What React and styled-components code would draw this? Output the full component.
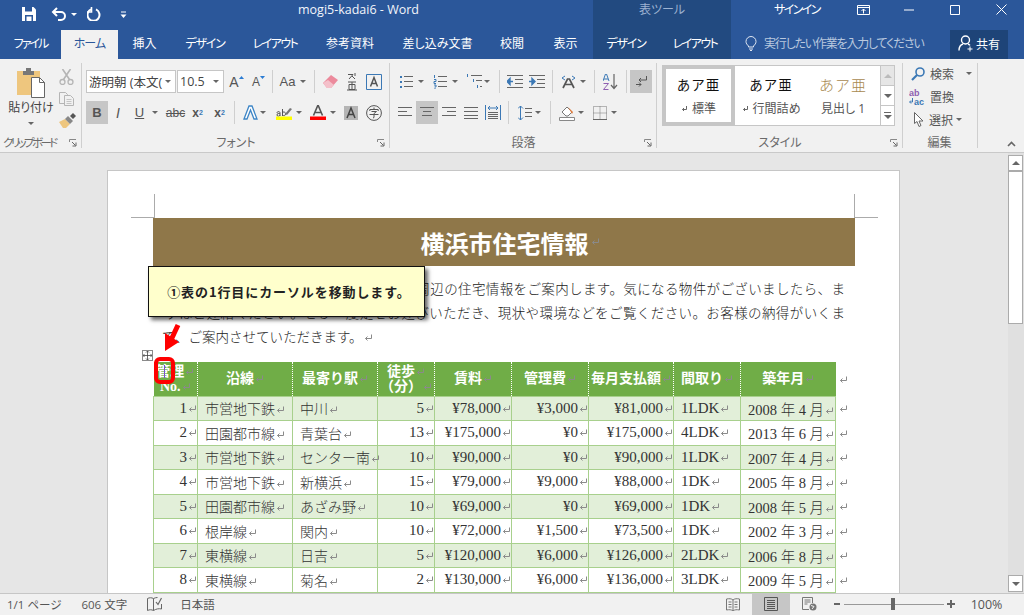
import styled, { createGlobalStyle } from 'styled-components';

const UI = '"Open Sans", "Noto Sans CJK JP", sans-serif';
const MINCHO = '"Liberation Serif", "Noto Sans CJK JP", serif';

const Global = createGlobalStyle`
  html, body { margin: 0; padding: 0; overflow: hidden; background: #e6e6e6; }
  * { box-sizing: border-box; }
`;

const Shell = styled.div`
  width: 1024px;
  height: 615px;
  display: flex;
  flex-direction: column;
  overflow: hidden;
  font-family: ${UI};
  font-feature-settings: 'palt';
`;

/* title bar */
const TitleBar = styled.div`
  height: 30px;
  flex: none;
  display: flex;
  background: #2b579a;
  color: #fff;
  font-size: 12px;
`;

const Qat = styled.div`
  width: 298px;
  display: flex;
  align-items: center;
  padding: 0 0 2px 22px;
`;

const QatGap = styled.span`
  width: ${(p) => p.$w}px;
`;

const QatCaret = styled.span`
  border-left: 3px solid transparent;
  border-right: 3px solid transparent;
  border-top: 3px solid #fff;
`;

const DocTitle = styled.div`
  width: 295px;
  line-height: 19px;
  font-size: 12.5px;
  color: #f2f5fa;
`;

const ContextLabel = styled.div`
  width: 138px;
  background: #224a80;
  color: #9db2d1;
  text-align: center;
  line-height: 20px;
`;

const SignIn = styled.div`
  margin-left: 43px;
  width: 66px;
  line-height: 19px;
  letter-spacing: -1.600px;
`;

const WinButton = styled.div`
  width: 46px;
  height: 19px;
  display: flex;
  align-items: center;
  justify-content: center;
`;

const TabRow = styled.div`
  height: 29px;
  flex: none;
  display: flex;
  background: #2b579a;
  color: #fff;
  font-size: 12px;
`;

const Tab = styled.div`
  width: ${(p) => p.$w}px;
  display: flex;
  align-items: center;
  justify-content: center;
  padding-bottom: 3px;
  letter-spacing: ${(p) => p.$ls ?? 0}px;
  background: ${(p) => (p.$active ? '#f1f1f1' : p.$context ? '#224a80' : 'transparent')};
  color: ${(p) => (p.$active ? '#2b579a' : '#fff')};
`;

const Hint = styled.div`
  margin-left: 14px;
  width: 205px;
  display: flex;
  align-items: center;
  gap: 7px;
  padding-bottom: 3px;
  color: #b9c8de;
  letter-spacing: -1.200px;
`;

const Share = styled.div`
  width: 58px;
  height: 29px;
  display: flex;
  align-items: center;
  justify-content: center;
  gap: 2px;
  padding-bottom: 2px;
  background: #1e4478;
`;

/* ribbon */
const Ribbon = styled.div`
  height: 94px;
  flex: none;
  display: flex;
  background: #f1f1f1;
  border-bottom: 1px solid #c9c9c9;
  color: #555;
`;

const Group = styled.div`
  position: relative;
  width: ${(p) => p.$w}px;
  flex: none;
  display: flex;
  flex-direction: column;
  &::after {
    content: '';
    position: absolute;
    right: 0;
    top: 4px;
    bottom: 4px;
    width: 1px;
    background: #cfcfcf;
  }
`;

const GroupBody = styled.div`
  height: 74px;
  display: flex;
  flex-direction: ${(p) => p.$dir || 'column'};
  gap: ${(p) => p.$gap ?? 8}px;
  padding: ${(p) => p.$pad || '11px 0 0 4px'};
`;

const GroupLabel = styled.div`
  height: 19px;
  font-size: ${(p) => p.$size || 12}px;
  line-height: 19px;
  text-align: ${(p) => p.$align || 'center'};
  color: #6a6a6a;
  white-space: nowrap;
  letter-spacing: ${(p) => p.$ls ?? 0}px;
  padding: 0 ${(p) => p.$inset ?? 0}px 0 ${(p) => p.$start ?? 0}px;
`;

const Launcher = styled.svg`
  position: absolute;
  right: 5px;
  bottom: 5px;
`;

const Row = styled.div`
  height: 23px;
  display: flex;
  align-items: center;
`;

const Tool = styled.div`
  width: ${(p) => p.$w}px;
  height: 23px;
  flex: none;
  display: flex;
  align-items: center;
  justify-content: center;
  gap: ${(p) => p.$gap ?? 0}px;
  background: ${(p) => (p.$active ? '#c6c6c6' : 'transparent')};
  color: #555;
  font-size: ${(p) => p.$size || 13}px;
  font-family: "Liberation Sans", sans-serif;
  font-weight: ${(p) => (p.$bold ? 700 : 400)};
  font-style: ${(p) => (p.$italic ? 'italic' : 'normal')};
  text-decoration: ${(p) => (p.$under ? 'underline' : p.$strike ? 'line-through' : 'none')};
`;

const SubScript = styled.sub`
  font-size: 7px;
  color: #3b78b5;
`;

const SupScript = styled.sup`
  font-size: 7px;
  color: #3b78b5;
`;

const Caret = styled.span`
  width: 0;
  height: 0;
  flex: none;
  margin-left: ${(p) => p.$ml ?? 0}px;
  border-left: 3px solid transparent;
  border-right: 3px solid transparent;
  border-top: 3px solid #666;
`;

const Sep = styled.div`
  width: ${(p) => p.$w}px;
  height: 23px;
  flex: none;
  display: flex;
  justify-content: center;
  &::before {
    content: '';
    width: 1px;
    background: #cfcfcf;
  }
`;

const ComboBox = styled.div`
  width: ${(p) => p.$w}px;
  height: 23px;
  flex: none;
  margin-right: ${(p) => p.$mr ?? 0}px;
  display: flex;
  align-items: center;
  justify-content: space-between;
  padding: 0 4px 0 2px;
  background: #fff;
  border: 1px solid #c6c6c6;
  font-size: 12.5px;
  color: #444;
  white-space: nowrap;
  font-feature-settings: normal;
`;

const Paste = styled.div`
  width: 56px;
  display: flex;
  flex-direction: column;
  align-items: center;
  font-size: 12px;
  color: #444;
`;

const PasteLabel = styled.div`
  margin-top: 2px;
  line-height: 16px;
  margin-bottom: 6px;
`;

const ClipTools = styled.div`
  display: flex;
  flex-direction: column;
  gap: 7px;
  padding-top: 1px;
`;

const Gallery = styled.div`
  margin: 6px 0 0 5px;
  width: 233px;
  height: 61px;
  display: flex;
  background: #fff;
  border: 1px solid #c6c6c6;
`;

const StyleTile = styled.div`
  width: ${(p) => p.$w}px;
  flex: none;
  display: flex;
  flex-direction: column;
  align-items: center;
  justify-content: center;
  gap: 6px;
  border: ${(p) => (p.$selected ? '4px solid #c6c6c6' : 'none')};
  margin: ${(p) => (p.$selected ? '-1px 0 -1px -1px' : '0')};
`;

const Sample = styled.div`
  font-size: ${(p) => p.$size || 13.5}px;
  line-height: 20px;
  color: ${(p) => p.$color || '#111'};
  font-weight: ${(p) => p.$weight || 400};
  letter-spacing: 1px;
  font-feature-settings: normal;
`;

const TileName = styled.div`
  font-size: 12px;
  line-height: 16px;
  color: #555;
  display: flex;
  align-items: center;
  gap: 4px;
  white-space: nowrap;
`;

const GalleryRail = styled.div`
  margin-left: auto;
  width: 14px;
  display: flex;
  flex-direction: column;
  border-left: 1px solid #c6c6c6;
`;

const RailButton = styled.div`
  flex: 1;
  display: flex;
  flex-direction: column;
  align-items: center;
  justify-content: center;
  gap: 2px;
  background: ${(p) => (p.$disabled ? '#e6e6e6' : '#fff')};
  border-bottom: ${(p) => (p.$last ? 'none' : '1px solid #c6c6c6')};
`;

const EditRow = styled.div`
  height: 23px;
  display: flex;
  align-items: center;
  gap: 5px;
  padding-left: ${(p) => p.$inset ?? 8}px;
  font-size: 12px;
  color: #555;
  white-space: nowrap;
`;

const Collapse = styled.div`
  flex: 1;
  display: flex;
  align-items: flex-end;
  justify-content: flex-end;
  padding: 0 8px 5px 0;
`;

/* document */
const DocArea = styled.div`
  flex: 1;
  min-height: 0;
  display: flex;
  background: #e6e6e6;
  overflow: hidden;
`;

const Canvas = styled.div`
  flex: 1;
  padding: 17px 0 0 107px;
  overflow: hidden;
`;

const Page = styled.div`
  position: relative;
  width: 793px;
  height: 600px;
  padding: 47px 0 0 45px;
  background: #fff;
  border: 1px solid #c6c6c6;
`;

const CropMark = styled.div`
  position: absolute;
  top: 23px;
  left: ${(p) => p.$x}px;
  width: 24px;
  height: 24px;
  border-bottom: 1px solid #ababab;
  ${(p) => (p.$flip ? 'border-left' : 'border-right')}: 1px solid #ababab;
`;

const Banner = styled.div`
  width: 702px;
  height: 48px;
  background: #8f7749;
  color: #fff;
  font-family: "Noto Sans CJK JP", sans-serif;
  font-weight: 700;
  font-size: 24px;
  display: flex;
  align-items: center;
  justify-content: center;
  gap: 1px;
  padding-left: 12px;
  font-feature-settings: normal;
`;

const Body = styled.div`
  margin: 12px 0 12px 1px;
  width: 691px;
  font-family: ${MINCHO};
  font-size: 13.5px;
  font-weight: 300;
  color: #222;
  font-feature-settings: normal;
`;

const Line = styled.div`
  height: 24px;
  line-height: 24px;
  white-space: nowrap;
  text-align: justify;
  text-align-last: ${(p) => (p.$last ? 'left' : 'justify')};
  padding-left: ${(p) => p.$indent ?? 0}px;
`;

const Grid = styled.table`
  width: 700px;
  table-layout: fixed;
  border-collapse: collapse;
  font-family: ${MINCHO};
  font-feature-settings: normal;
`;

const HeadCell = styled.th`
  height: 34px;
  padding: 0;
  background: #70ad47;
  color: #fff;
  font-size: 14px;
  line-height: 15px;
  font-weight: 700;
  text-align: center;
  border-right: 1px dotted #fff;
  &:nth-child(9) {
    border-right: none;
  }
`;

const Cell = styled.td`
  height: 24.5px;
  padding: ${(p) => (p.$right ? '0' : '0 0 0 7px')};
  background: ${(p) => (p.$band ? '#e2efd9' : '#fff')};
  border: 1px solid #a8d08d;
  color: #333;
  font-size: ${(p) => p.$size}px;
  font-weight: 300;
  text-align: ${(p) => (p.$right ? 'right' : 'left')};
  white-space: nowrap;
`;

const EndCell = styled.td`
  padding: 0 0 0 2px;
  background: #fff;
  border: none;
`;

const Handle = styled.div`
  position: absolute;
  left: 34px;
  top: 179px;
  width: 11px;
  height: 11px;
  display: flex;
  align-items: center;
  justify-content: center;
  background: #fff;
  border: 1px solid #8a8a8a;
`;

const Callout = styled.div`
  position: absolute;
  left: 40px;
  top: 95px;
  width: 277px;
  height: 51px;
  display: flex;
  align-items: center;
  justify-content: center;
  padding-left: 5px;
  background: #ffffcc;
  border: 1px solid #111;
  box-shadow: 3px 3px 4px rgba(0, 0, 0, 0.6);
  font-family: "Noto Sans CJK JP", sans-serif;
  font-weight: 700;
  font-size: 13px;
  letter-spacing: 0.9px;
  color: #222;
  font-feature-settings: normal;
`;

const PointerArrow = styled.svg`
  position: absolute;
  left: 53px;
  top: 152px;
`;

const CaretRing = styled.div`
  position: absolute;
  left: 46px;
  top: 186px;
  width: 21px;
  height: 27px;
  border: 4px solid #ff0000;
  border-radius: 6px;
  &::after {
    content: '';
    position: absolute;
    left: 6px;
    top: 4px;
    width: 1px;
    height: 13px;
    background: #7a4fd0;
  }
`;

const Scrollbar = styled.div`
  width: 16px;
  flex: none;
  display: flex;
  flex-direction: column;
  padding-top: 2px;
  background: #e0e0e0;
`;

const ScrollButton = styled.div`
  width: 15px;
  height: ${(p) => p.$h}px;
  display: flex;
  align-items: center;
  justify-content: center;
  background: #fff;
  border: 1px solid #ababab;
  margin-top: ${(p) => (p.$end ? 'auto' : '0')};
  margin-bottom: ${(p) => (p.$end ? '1px' : '0')};
`;

const Thumb = styled.div`
  width: 15px;
  height: 153px;
  background: #fff;
  border: 1px solid #ababab;
`;

const UpCaret = styled(Caret)`
  border-top: none;
  border-bottom: 4px solid ${(p) => p.$color || '#666'};
  border-left-width: 4px;
  border-right-width: 4px;
`;

const DownCaret = styled(Caret)`
  border-top: 4px solid #666;
  border-left-width: 4px;
  border-right-width: 4px;
`;

const MoreBar = styled.span`
  width: 7px;
  height: 1px;
  background: #666;
`;

/* status bar */
const StatusBar = styled.div`
  height: 22px;
  flex: none;
  display: flex;
  align-items: center;
  background: #f1f1f1;
  border-top: 1px solid #c6c6c6;
  font-size: 11.5px;
  color: #555;
  padding-bottom: 1px;
`;

const StatusItem = styled.div`
  margin-left: ${(p) => p.$ml}px;
  display: flex;
  align-items: center;
  white-space: nowrap;
  font-size: ${(p) => p.$size || 11.5}px;
`;

const ViewButton = styled.div`
  width: ${(p) => p.$w}px;
  height: 21px;
  display: flex;
  align-items: center;
  justify-content: center;
  background: ${(p) => (p.$active ? '#c6c6c6' : 'transparent')};
`;

const ZoomTrack = styled.div`
  position: relative;
  width: 100px;
  height: 1px;
  margin: 0 3px 0 4px;
  background: #999;
`;

const ZoomThumb = styled.div`
  position: absolute;
  left: 47px;
  top: -6px;
  width: 4px;
  height: 12px;
  background: #666;
`;

const MarkSvg = styled.svg`
  margin-left: 1px;
`;

/* icons */
const Svg = ({ w, h = w, children, ...rest }) => (
  <svg width={w} height={h} viewBox={`0 0 ${w} ${h}`} fill="none" {...rest}>
    {children}
  </svg>
);

const SaveIcon = () => (
  <Svg w={14} h={14}>
    <path d="M0 0h11.5L14 2.5V14H0z" fill="#fff" />
    <path d="M3 0h7v4.5H3z" fill="#2b579a" />
    <path d="M3 8h8v6H3z" fill="#2b579a" />
    <path d="M4.5 9.5h5v4.5h-5z" fill="#fff" />
  </Svg>
);
const UndoIcon = () => (
  <Svg w={16} h={14}>
    <path d="M2 5h8a4 4 0 0 1 0 8H7" stroke="#fff" strokeWidth="2" />
    <path d="M6 1L2 5l4 4" stroke="#fff" strokeWidth="2" />
  </Svg>
);
const RedoIcon = () => (
  <Svg w={14} h={14}>
    <path d="M4 2.4a6 6 0 1 0 5 0" stroke="#fff" strokeWidth="2" />
    <path d="M4.5 0v5H0" stroke="#fff" strokeWidth="1.6" />
  </Svg>
);
const QatMore = () => (
  <Svg w={7} h={7}>
    <path d="M1 1h5" stroke="#fff" />
    <path d="M.5 3.5h6L3.5 7z" fill="#fff" />
  </Svg>
);
const DisplayIcon = () => (
  <Svg w={13} h={10}>
    <path d="M.5.5h12v9H.5zM.5 2.5h12" stroke="#fff" />
    <path d="M6.5 8.5V4M4.5 6l2-2 2 2" stroke="#fff" />
  </Svg>
);
const MinIcon = () => <Svg w={10} h={2}><path d="M0 1h10" stroke="#fff" /></Svg>;
const MaxIcon = () => <Svg w={10} h={10}><path d="M.5.5h9v9h-9z" stroke="#fff" /></Svg>;
const CloseIcon = () => <Svg w={11} h={11}><path d="M.5.5l10 10M10.5.5l-10 10" stroke="#fff" /></Svg>;
const LampIcon = () => (
  <Svg w={12} h={15}>
    <path d="M3.5 10C2 8.5 1 7.5 1 5.5a5 5 0 0 1 10 0c0 2-1 3-2.5 4.500V11h-5z" stroke="#dfe6f1" />
    <path d="M4 13h4M5 14.500h2" stroke="#dfe6f1" />
  </Svg>
);
const ShareIcon = () => (
  <Svg w={16} h={17}>
    <circle cx="7.500" cy="5" r="4" stroke="#fff" strokeWidth="1.400" />
    <path d="M1 15.500c0-4 2.500-6 4-6.500M10 9c.8.3 1.500.8 2 1.400" stroke="#fff" strokeWidth="1.400" />
    <path d="M12 11.500v5M9.500 14h5" stroke="#fff" />
  </Svg>
);
const PasteIcon = () => (
  <Svg w={28} h={30}>
    <path d="M0 3h23v24H0z" fill="#eec67e" />
    <path d="M6 3h11v4H6z" fill="#777" />
    <path d="M9 0h5v4H9z" fill="#777" />
    <path d="M14.500 9.500h8l5 5v15h-13z" fill="#fff" stroke="#666" />
    <path d="M22.500 9.500v5h5" stroke="#666" />
  </Svg>
);
const ScissorsIcon = () => (
  <Svg w={15} h={16}>
    <circle cx="3.500" cy="13" r="2.500" stroke="#b5b5b5" strokeWidth="1.300" />
    <circle cx="11.500" cy="13" r="2.500" stroke="#b5b5b5" strokeWidth="1.300" />
    <path d="M10.500 10.500L3.500 0M4.500 10.500L11.500 0" stroke="#b5b5b5" strokeWidth="1.600" />
  </Svg>
);
const CopyIcon = () => (
  <Svg w={15} h={14}>
    <path d="M.5.5h6l2 2v9h-8z" fill="#f1f1f1" stroke="#b5b5b5" />
    <path d="M5.500 3.500h6l3 3v7h-9z" fill="#f1f1f1" stroke="#b5b5b5" />
    <path d="M7.500 7.500h5M7.500 9.500h5M7.500 11.500h5" stroke="#c5c5c5" />
  </Svg>
);
const PainterIcon = () => (
  <Svg w={17} h={15}>
    <path d="M0 9l6-3 5 5-4 4H4z" fill="#eec67e" />
    <path d="M6 6l5 5 3-3-5-5z" fill="#888" />
    <path d="M11 3l3-3 3 3-3 3z" fill="#555" />
  </Svg>
);
const SizeArrow = ({ up }) => (
  <Svg w={5} h={12}>
    <path d={up ? 'M0 3l2.500-3L5 3z' : 'M0 0h5L2.500 3z'} fill="#2b7cd3" />
  </Svg>
);
const EraserIcon = () => (
  <Svg w={17} h={16}>
    <path d="M1 9l8-8 7 5-7 8H5z" fill="#ec8a9c" />
    <path d="M1 9l4 5h4l3-3-6-5z" fill="#f4c0ca" />
  </Svg>
);
const RubyIcon = () => (
  <Svg w={10} h={18}>
    <path d="M1 1.500h5L2 6M5 3l3 3M8 0v3" stroke="#555" />
    <path d="M1 9h8M2 11.500h6v5H2zM5 9v8M0 17h10" stroke="#555" />
  </Svg>
);
const BoxedAIcon = () => (
  <Svg w={16} h={16}>
    <path d="M.5.5h15v15H.5z" stroke="#3b78b5" />
    <path d="M4.500 12.500L8 3.500l3.500 9M6 9.500h4" stroke="#555" strokeWidth="1.500" />
  </Svg>
);
const EffectA = () => (
  <Svg w={15} h={15}>
    <path d="M1 14L6 1h3l5 13h-3L7.500 5 4 14z" fill="#fff" stroke="#3d85c6" strokeWidth="1.300" />
  </Svg>
);
const HighlightIcon = () => (
  <Svg w={16} h={15}>
    <path d="M1 8c0-2 3-2 3 0v3M4 9c-1-1-3-1-3 1s3 1 3 0M6.500 4v7M6.500 8c1-2 3-1 3 1s-2 2-3 1" stroke="#555" />
    <path d="M9 9l5-6 2 1-5 6z" fill="#777" />
    <path d="M0 11.500h16V15H0z" fill="#ffff00" />
  </Svg>
);
const ColorA = () => (
  <Svg w={16} h={15}>
    <path d="M3.500 10.500L8 0l4.500 10.500M5 7.500h6" stroke="#555" strokeWidth="1.600" />
    <path d="M0 11.500h16V15H0z" fill="#ff0000" />
  </Svg>
);
const ShadedA = () => (
  <Svg w={14} h={14}>
    <path d="M0 0h14v14H0z" fill="#b5b5b5" />
    <path d="M3 12L7 2l4 10M4.500 8.500h5" stroke="#444" strokeWidth="1.500" />
  </Svg>
);
const EnclosedJi = () => (
  <Svg w={16} h={16}>
    <circle cx="8" cy="8" r="7.400" stroke="#555" />
    <path d="M8 2.500v1.500M3.800 6V4.500h8.400V6M5.500 6.500h5L8 8.500v4l-1 .5M3.500 9.500h9" stroke="#555" />
  </Svg>
);
const Dots = ({ y, c = '#3b78b5' }) => <path d={`M1 ${y}h2v2H1z`} fill={c} />;
const BulletIcon = () => (
  <Svg w={14} h={14}>
    <Dots y={1} /><Dots y={6} /><Dots y={11} />
    <path d="M5 1.500h9M5 6.500h9M5 11.500h9" stroke="#666" />
  </Svg>
);
const NumberIcon = () => (
  <Svg w={14} h={14}>
    <path d="M1.500 0v3M1 4.500h2v2H1v2h2M1 10h2v2H1.500M1 14h2" stroke="#3b78b5" />
    <path d="M5 1.500h9M5 6.500h9M5 11.500h9" stroke="#666" />
  </Svg>
);
const MultiIcon = () => (
  <Svg w={16} h={15}>
    <path d="M1.500 0v3M7.500 5v3M11.500 11v3" stroke="#3b78b5" />
    <path d="M5 1.500h11M10 6.500h6M14 12.500h2" stroke="#666" />
  </Svg>
);
const IndentIcon = ({ flip }) => (
  <Svg w={16} h={13}>
    <path d="M0 .5h16M8 4.500h8M8 8.500h8M0 12.500h16" stroke="#666" />
    <path
      d={flip ? 'M0 6.500h4M3 3.500l3 3-3 3z' : 'M6 6.500H2M3 3.500l-3 3 3 3z'}
      stroke="#3b78b5"
      fill="#3b78b5"
      strokeWidth="1.400"
    />
  </Svg>
);
const AsianIcon = () => (
  <Svg w={15} h={14}>
    <path d="M2 13L6.500 4h2L13 13M4.500 9.500h6" stroke="#555" strokeWidth="1.700" />
    <path d="M4 1L1 3l3 2M11 1l3 2-3 2" stroke="#3b78b5" />
  </Svg>
);
const SortIcon = () => (
  <Svg w={16} h={16}>
    <path d="M0 7L2.500 0h1L6 7M1 5h4" stroke="#3b78b5" />
    <path d="M.5 9.500h5L.5 15.500h5" stroke="#8e5fb0" />
    <path d="M11 0v14M8 11l3 3.500 3-3.500" stroke="#666" strokeWidth="1.200" />
  </Svg>
);
const MarksIcon = () => (
  <Svg w={11} h={12}>
    <path d="M10.500 0v4H3M5 2L3 4l2 2" stroke="#555" />
    <path d="M0 8.500h5M3 6.500l2 2-2 2" stroke="#555" />
  </Svg>
);
const alignLines = {
  left: 'M0 1.500h14M0 5.500h9M0 9.500h14',
  center: 'M0 1.500h14M3 5.500h8M2 9.500h10',
  right: 'M0 1.500h14M5 5.500h9M0 9.500h14',
  full: 'M0 1.500h14M0 5.500h14M0 9.500h14M0 12.500h14',
};
const AlignIcon = ({ kind }) => (
  <Svg w={14} h={13}>
    <path d={alignLines[kind]} stroke="#666" />
  </Svg>
);
const DistributedIcon = () => (
  <Svg w={16} h={15}>
    <path d="M.5 0v15M15.500 0v15" stroke="#3b78b5" />
    <path d="M3 3h10M5 1l-2 2 2 2M11 1l2 2-2 2" stroke="#3b78b5" />
    <path d="M3 7.500h10M3 9.500h10M3 11.500h10M3 13.500h10" stroke="#666" />
  </Svg>
);
const LineSpacingIcon = () => (
  <Svg w={14} h={16}>
    <path d="M2.500 1v14M0 3.500L2.500 1 5 3.500M0 12.500L2.500 15 5 12.500" stroke="#3b78b5" />
    <path d="M7 3.500h7M7 7.500h7M7 11.500h7" stroke="#666" />
  </Svg>
);
const ShadingIcon = () => (
  <Svg w={16} h={16}>
    <path d="M3 7l5-5 5 5-4 4H7z" fill="#fff" stroke="#777" />
    <path d="M9 2l5 5-1 2z" fill="#e07a3a" />
    <path d="M.5 12.500h15v3H.5z" fill="#fff" stroke="#888" />
  </Svg>
);
const BordersIcon = () => (
  <Svg w={14} h={14}>
    <path d="M.5.5h13v13H.5zM7 .5v13M.5 7h13" stroke="#777" strokeDasharray="1 1" />
    <path d="M0 13.500h14" stroke="#666" />
  </Svg>
);
const SearchIcon = () => (
  <Svg w={14} h={14}>
    <circle cx="9" cy="5" r="4" stroke="#3b78b5" strokeWidth="1.600" />
    <path d="M6 8l-5 5" stroke="#3b78b5" strokeWidth="2.200" />
  </Svg>
);
const ReplaceIcon = () => (
  <Svg w={16} h={16}>
    <text x="0" y="7" fontSize="9" fontFamily="Liberation Sans" fontWeight="700" fill="#8e5fb0">ab</text>
    <text x="5" y="15.500" fontSize="9" fontFamily="Liberation Sans" fontWeight="700" fill="#3b78b5">ac</text>
    <path d="M3.500 9v4H1M2 11.500L.5 13 2 14.500" stroke="#3b78b5" />
  </Svg>
);
const PointerIcon = () => (
  <Svg w={10} h={15}>
    <path d="M.5.5v11l2.500-2 2 5 2-1-2-4.500h4z" fill="#fff" stroke="#666" />
  </Svg>
);
const ChevronUp = () => (
  <Svg w={9} h={6}>
    <path d="M1 5l3.500-3.500L8 5" stroke="#666" strokeWidth="1.600" />
  </Svg>
);
const LauncherIcon = () => (
  <Launcher width="8" height="8" viewBox="0 0 8 8" fill="none">
    <path d="M.5 3V.5H7" stroke="#888" />
    <path d="M3 3l3.500 3.500M7 3.500V7H3.500" stroke="#666" />
  </Launcher>
);
const ParaMark = () => (
  <MarkSvg width="9" height="8" viewBox="0 0 9 8" fill="none">
    <path d="M7.500 .5v4H1.500M3.500 2.500l-2 2 2 2" stroke="#8a8a8a" />
  </MarkSvg>
);
const SmallMark = () => (
  <Svg w={7} h={7}>
    <path d="M5.500 1v3.500H1.500M3 3L1.500 4.500 3 6" stroke="#666" />
  </Svg>
);
const MoveHandle = () => (
  <Svg w={9} h={9}>
    <path d="M4.500 0v9M0 4.500h9M3 1.500L4.500 0 6 1.500M3 7.500L4.500 9 6 7.500M1.500 3L0 4.500 1.500 6M7.500 3L9 4.500 7.500 6" stroke="#444" strokeWidth=".8" />
  </Svg>
);
const ProofIcon = () => (
  <Svg w={15} h={14}>
    <path d="M.5 1.500c2-1 4-1 6 0v12c-2-1-4-1-6 0zM6.500 1.500c1.500-.8 3-1 4-1M14.500 7v5c-2.500-.6-5-.3-8 1.500" stroke="#666" />
    <path d="M9 5l2 2.500L14.500 1" stroke="#666" strokeWidth="1.200" />
  </Svg>
);
const ReadIcon = () => (
  <Svg w={14} h={13}>
    <path d="M.5 1c2.500-.5 5-.5 6.500 1 1.500-1.500 4-1.500 6.500-1v11c-2.500-.5-5-.5-6.500 1-1.500-1.500-4-1.500-6.500-1zM7 2v11" stroke="#777" />
    <path d="M2.500 4h3M2.500 6.500h3M2.500 9h3M8.500 4h3M8.500 6.500h3M8.500 9h3" stroke="#777" />
  </Svg>
);
const PrintIcon = () => (
  <Svg w={14} h={14}>
    <path d="M.5.5h13v13H.5z" stroke="#555" />
    <path d="M3 3.500h8M3 5.500h8M3 7.500h8M3 9.500h8M3 11.500h8" stroke="#555" />
  </Svg>
);
const WebIcon = () => (
  <Svg w={15} h={14}>
    <path d="M7 12.500H.5V.5h10V6" stroke="#777" />
    <path d="M2.500 3h6M2.500 5h6M2.500 7h3" stroke="#777" />
    <circle cx="11" cy="10" r="3.500" fill="#777" />
    <path d="M9 8.500l3 1-2 2.500" stroke="#f1f1f1" />
  </Svg>
);

const headers = [
  ['管理', 'No.'],
  ['沿線'],
  ['最寄り駅'],
  ['徒歩', '（分）'],
  ['賃料'],
  ['管理費'],
  ['毎月支払額'],
  ['間取り'],
  ['築年月'],
];

const widths = [44, 95, 85, 57, 77, 77, 85, 67, 95, 18];

const sizes = [15, 14, 14, 15, 15, 15, 15, 15, 14.5];

const rows = [
  [1, '市営地下鉄', '中川', 5, '¥78,000', '¥3,000', '¥81,000', '1LDK', '2008 年 4 月'],
  [2, '田園都市線', '青葉台', 13, '¥175,000', '¥0', '¥175,000', '4LDK', '2013 年 6 月'],
  [3, '市営地下鉄', 'センター南', 10, '¥90,000', '¥0', '¥90,000', '1LDK', '2007 年 4 月'],
  [4, '市営地下鉄', '新横浜', 15, '¥79,000', '¥9,000', '¥88,000', '1DK', '2005 年 8 月'],
  [5, '田園都市線', 'あざみ野', 10, '¥69,000', '¥0', '¥69,000', '1DK', '2008 年 5 月'],
  [6, '根岸線', '関内', 10, '¥72,000', '¥1,500', '¥73,500', '1DK', '2002 年 3 月'],
  [7, '東横線', '日吉', 5, '¥120,000', '¥6,000', '¥126,000', '2LDK', '2006 年 8 月'],
  [8, '東横線', '菊名', 2, '¥130,000', '¥6,000', '¥136,000', '3LDK', '2009 年 5 月'],
];

const rightCols = [0, 3, 4, 5, 6];

export default function App() {
  return (
    <Shell lang="ja">
      <Global />
      <TitleBar>
        <Qat>
          <SaveIcon />
          <QatGap $w={15} />
          <UndoIcon />
          <QatGap $w={4} />
          <QatCaret />
          <QatGap $w={10} />
          <RedoIcon />
          <QatGap $w={19} />
          <QatMore />
        </Qat>
        <DocTitle>mogi5-kadai6 - Word</DocTitle>
        <ContextLabel>表ツール</ContextLabel>
        <SignIn>サインイン</SignIn>
        <WinButton><DisplayIcon /></WinButton>
        <WinButton><MinIcon /></WinButton>
        <WinButton><MaxIcon /></WinButton>
        <WinButton><CloseIcon /></WinButton>
      </TitleBar>

      <TabRow>
        <Tab $w={61} $ls={-2}>ファイル</Tab>
        <Tab $w={57} $active $ls={-1}>ホーム</Tab>
        <Tab $w={53}>挿入</Tab>
        <Tab $w={68} $ls={-1.2}>デザイン</Tab>
        <Tab $w={72} $ls={-1.6}>レイアウト</Tab>
        <Tab $w={78}>参考資料</Tab>
        <Tab $w={97}>差し込み文書</Tab>
        <Tab $w={52}>校閲</Tab>
        <Tab $w={55}>表示</Tab>
        <Tab $w={66} $context $ls={-1.2}>デザイン</Tab>
        <Tab $w={72} $context $ls={-1.6}>レイアウト</Tab>
        <Hint>
          <LampIcon />
          実行したい作業を入力してください
        </Hint>
        <Share>
          <ShareIcon />
          共有
        </Share>
      </TabRow>

      <Ribbon>
        <Group $w={82}>
          <GroupBody $dir="row" $gap={0} $pad="9px 0 0 3px">
            <Paste>
              <PasteIcon />
              <PasteLabel>貼り付け</PasteLabel>
              <Caret />
            </Paste>
            <ClipTools>
              <ScissorsIcon />
              <CopyIcon />
              <PainterIcon />
            </ClipTools>
          </GroupBody>
          <GroupLabel $align="left" $start={3} $size={11.5} $ls={-2.6}>クリップボード</GroupLabel>
          <LauncherIcon />
        </Group>

        <Group $w={308}>
          <GroupBody>
            <Row>
              <ComboBox $w={90} $mr={1}>
                <span>游明朝 (本文(</span>
                <Caret />
              </ComboBox>
              <ComboBox $w={47}>
                <span>10.5</span>
                <Caret />
              </ComboBox>
              <Tool $w={25} $size={14}>A<SizeArrow up /></Tool>
              <Tool $w={19} $size={12}>A<SizeArrow /></Tool>
              <Sep $w={8} />
              <Tool $w={34} $gap={5}>Aa<Caret /></Tool>
              <Sep $w={8} />
              <Tool $w={25}><EraserIcon /></Tool>
              <Tool $w={18}><RubyIcon /></Tool>
              <Tool $w={25}><BoxedAIcon /></Tool>
            </Row>
            <Row>
              <Tool $w={22} $active $bold>B</Tool>
              <Tool $w={20} $italic $size={14}>I</Tool>
              <Tool $w={36} $gap={7}><Tool as="span" $w={11} $under $size={13}>U</Tool><Caret /></Tool>
              <Tool $w={23} $strike $size={12}>abc</Tool>
              <Tool $w={21} $bold $size={12}>x<SubScript>2</SubScript></Tool>
              <Tool $w={23} $bold $size={12}>x<SupScript>2</SupScript></Tool>
              <Sep $w={6} />
              <Tool $w={35} $gap={2}><EffectA /><Caret /></Tool>
              <Tool $w={34} $gap={4}><HighlightIcon /><Caret /></Tool>
              <Tool $w={34} $gap={4}><ColorA /><Caret /></Tool>
              <Tool $w={21}><ShadedA /></Tool>
              <Tool $w={25}><EnclosedJi /></Tool>
            </Row>
          </GroupBody>
          <GroupLabel>フォント</GroupLabel>
          <LauncherIcon />
        </Group>

        <Group $w={267}>
          <GroupBody>
            <Row>
              <Tool $w={34} $gap={5}><BulletIcon /><Caret /></Tool>
              <Tool $w={34} $gap={5}><NumberIcon /><Caret /></Tool>
              <Tool $w={32} $gap={2}><MultiIcon /><Caret /></Tool>
              <Sep $w={10} />
              <Tool $w={22}><IndentIcon /></Tool>
              <Tool $w={22}><IndentIcon flip /></Tool>
              <Sep $w={9} />
              <Tool $w={32} $gap={4}><AsianIcon /><Caret /></Tool>
              <Sep $w={10} />
              <Tool $w={23}><SortIcon /></Tool>
              <Sep $w={8} />
              <Tool $w={22} $active><MarksIcon /></Tool>
            </Row>
            <Row>
              <Tool $w={22}><AlignIcon kind="left" /></Tool>
              <Tool $w={22} $active><AlignIcon kind="center" /></Tool>
              <Tool $w={22}><AlignIcon kind="right" /></Tool>
              <Tool $w={22}><AlignIcon kind="full" /></Tool>
              <Tool $w={22}><DistributedIcon /></Tool>
              <Sep $w={8} />
              <Tool $w={34} $gap={3}><LineSpacingIcon /><Caret /></Tool>
              <Sep $w={8} />
              <Tool $w={34} $gap={3}><ShadingIcon /><Caret /></Tool>
              <Tool $w={34} $gap={4}><BordersIcon /><Caret /></Tool>
            </Row>
          </GroupBody>
          <GroupLabel>段落</GroupLabel>
          <LauncherIcon />
        </Group>

        <Group $w={246}>
          <GroupBody $pad="0" $gap={0}>
            <Gallery>
              <StyleTile $w={73} $selected>
                <Sample>あア亜</Sample>
                <TileName><SmallMark />標準</TileName>
              </StyleTile>
              <StyleTile $w={72}>
                <Sample>あア亜</Sample>
                <TileName><SmallMark />行間詰め</TileName>
              </StyleTile>
              <StyleTile $w={72}>
                <Sample $size={15} $color="#a8894f" $weight={300}>あア亜</Sample>
                <TileName>見出し 1</TileName>
              </StyleTile>
              <GalleryRail>
                <RailButton $disabled><UpCaret $color="#bbb" /></RailButton>
                <RailButton><DownCaret /></RailButton>
                <RailButton $last><MoreBar /><DownCaret /></RailButton>
              </GalleryRail>
            </Gallery>
          </GroupBody>
          <GroupLabel>スタイル</GroupLabel>
          <LauncherIcon />
        </Group>

        <Group $w={75}>
          <GroupBody $pad="3px 0 0 0" $gap={0}>
            <EditRow>
              <SearchIcon />
              検索
              <Caret $ml={7} />
            </EditRow>
            <EditRow $inset={6}>
              <ReplaceIcon />
              置換
            </EditRow>
            <EditRow $inset={11}>
              <PointerIcon />
              選択
              <Caret $ml={-2} />
            </EditRow>
          </GroupBody>
          <GroupLabel $inset={2}>編集</GroupLabel>
        </Group>

        <Collapse>
          <ChevronUp />
        </Collapse>
      </Ribbon>

      <DocArea>
        <Canvas>
          <Page>
            <CropMark $x={23} />
            <CropMark $x={746} $flip />
            <Banner>
              横浜市住宅情報
              <ParaMark />
            </Banner>
            <Body>
              <Line>横浜市内の物件情報を掲載します。横浜駅周辺の住宅情報をご案内します。気になる物件がございましたら、ま</Line>
              <Line $indent={11}>ずはご連絡ください。ぜひ一度足をお運びいただき、現状や環境などをご覧ください。お客様の納得がいくま</Line>
              <Line $last $indent={8}>で、ご案内させていただきます。<ParaMark /></Line>
            </Body>
            <Grid>
              <colgroup>
                {widths.map((w, i) => (
                  <col key={i} style={{ width: w }} />
                ))}
              </colgroup>
              <thead>
                <tr>
                  {headers.map((lines, i) => (
                    <HeadCell key={i}>
                      {lines.map((text) => (
                        <div key={text}>
                          {text}
                          <ParaMark />
                        </div>
                      ))}
                    </HeadCell>
                  ))}
                  <EndCell><ParaMark /></EndCell>
                </tr>
              </thead>
              <tbody>
                {rows.map((row, r) => (
                  <tr key={r}>
                    {row.map((value, c) => (
                      <Cell key={c} $size={sizes[c]} $band={r % 2 === 0} $right={rightCols.includes(c)}>
                        {value}
                        <ParaMark />
                      </Cell>
                    ))}
                    <EndCell><ParaMark /></EndCell>
                  </tr>
                ))}
              </tbody>
            </Grid>
            <Handle><MoveHandle /></Handle>
            <Callout>①表の1行目にカーソルを移動します。</Callout>
            <PointerArrow width="20" height="30" viewBox="0 0 20 30" fill="none">
              <path d="M17 2L10 17" stroke="#ff0000" strokeWidth="5" />
              <path d="M4 28L4 10l14 9z" fill="#ff0000" />
            </PointerArrow>
            <CaretRing />
          </Page>
        </Canvas>
        <Scrollbar>
          <ScrollButton $h={16}><UpCaret /></ScrollButton>
          <Thumb />
          <ScrollButton $h={17} $end><DownCaret /></ScrollButton>
        </Scrollbar>
      </DocArea>

      <StatusBar>
        <StatusItem $ml={7}>1/1 ページ</StatusItem>
        <StatusItem $ml={20}>606 文字</StatusItem>
        <StatusItem $ml={20}><ProofIcon /></StatusItem>
        <StatusItem $ml={18}>日本語</StatusItem>
        <StatusItem $ml={511}><ReadIcon /></StatusItem>
        <StatusItem $ml={12}>
          <ViewButton $w={38} $active><PrintIcon /></ViewButton>
        </StatusItem>
        <StatusItem $ml={12}><WebIcon /></StatusItem>
        <StatusItem $ml={17}>
          <Svg w={6} h={2}><path d="M0 1h6" stroke="#666" strokeWidth="2" /></Svg>
          <ZoomTrack><ZoomThumb /></ZoomTrack>
          <Svg w={8} h={8}><path d="M0 4h8M4 0v8" stroke="#666" strokeWidth="2" /></Svg>
        </StatusItem>
        <StatusItem $ml={16} $size={12.5}>100%</StatusItem>
      </StatusBar>
    </Shell>
  );
}
